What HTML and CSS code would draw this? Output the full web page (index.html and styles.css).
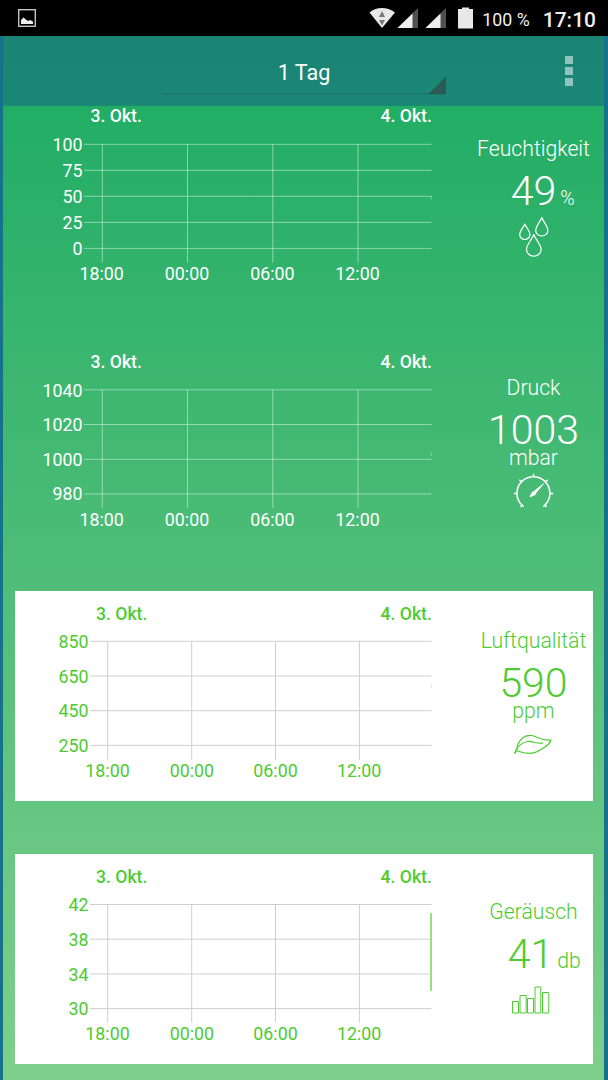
FILE: index.html
```
<!DOCTYPE html>
<html lang="de">
<head>
    <meta charset="UTF-8">
    <meta name="viewport" content="width=device-width, initial-scale=1.0">
    <title>Wetterstation</title>
    <link rel="stylesheet" href="styles.css">
</head>
<body>

    <div class="statusbar">
        <svg class="picture" width="18" height="18" viewBox="0 0 18 18">
            <rect x="0.7" y="0.7" width="16.6" height="16.6" fill="none" stroke="#c4c4c4" stroke-width="1.4"/>
            <path d="M3 15v-4l2.500-2.500 3 2.500 1.500 1 2-1 3 1.500v2.500z" fill="#eee"/>
        </svg>
        <div class="status-right">
            <svg width="78" height="22" viewBox="0 0 78 22">
                <path d="M0.500 5.500C4 2.200 8.500 1 13 1s9 1.200 13 4.500L13 21z" fill="#e8e8e8"/>
                <path d="M10 10l3-6 3 6zM10 13h6l-3 5.500z" fill="#777"/>
                <path d="M49 1v20H28.500z" fill="#505050"/>
                <path d="M43.500 6.500V21H28.500z" fill="#eee"/>
                <path d="M77 1v20H56.500z" fill="#505050"/>
                <path d="M71.500 6.500V21H56.500z" fill="#eee"/>
            </svg>
            <svg class="battery" width="15" height="22" viewBox="0 0 15 22">
                <path d="M4 0.500h7V2h4v19.500H0V2h4z" fill="#e8e8e8"/>
            </svg>
            <span class="percent">100 %</span>
            <span class="clock">17:10</span>
        </div>
    </div>

    <div class="app">
        <header class="toolbar">
            <div class="spinner">1 Tag</div>
            <div class="menu"><i></i><i></i><i></i></div>
        </header>

        <main>
            <!-- Feuchtigkeit -->
            <section class="module humidity">
                <svg class="chart" width="430" height="190" viewBox="0 0 430 190">
                    <path class="grid" d="M69 38.300H416.500M69 64.300H416.500M69 90.300H416.500M69 116.400H416.500M69 142.400H416.500M87.300 38V156.500M172.500 38V156.500M257.800 38V156.500M343 38V156.500"/>
                    <path class="line faint" d="M416.300 90V93.500"/>
                    <g class="day"><text x="75.500" y="16.300">3. Okt.</text><text x="365.500" y="16.300">4. Okt.</text></g>
                    <g class="y-axis">
                        <text x="67.500" y="45">100</text><text x="67.500" y="71">75</text><text x="67.500" y="97">50</text><text x="67.500" y="123">25</text><text x="67.500" y="149">0</text>
                    </g>
                    <g class="x-axis">
                        <text x="86.700" y="174">18:00</text><text x="172" y="174">00:00</text><text x="257.300" y="174">06:00</text><text x="342.500" y="174">12:00</text>
                    </g>
                </svg>
                <div class="info">
                    <div class="title">Feuchtigkeit</div>
                    <div class="value">49<span class="unit-inline percent-unit">%</span></div>
                    <svg class="icon" width="42" height="44" viewBox="0 0 42 44">
                        <path d="M11.800 9C10 13 6.700 16 6.700 19.500a5.100 5 0 0 0 10.200 0C16.900 16 13.500 13 11.800 9z"/>
                        <path d="M28.800 2.500C27 7 22.700 11.500 22.700 15.500a6.100 5.500 0 0 0 12.200 0C34.900 11.500 30.500 7 28.800 2.500z"/>
                        <path d="M20.800 19.500C19 24.500 13.500 29.500 13.500 34.500a7.300 6.700 0 0 0 14.600 0C28.100 29.500 22.500 24.500 20.800 19.500z"/>
                    </svg>
                </div>
            </section>

            <!-- Druck -->
            <section class="module pressure">
                <svg class="chart" width="430" height="210" viewBox="0 0 430 210">
                    <path class="grid" d="M69 49.800H416.500M69 84.500H416.500M69 119.300H416.500M69 154H416.500M87.300 50V168M172.500 50V168M257.800 50V168M343 50V168"/>
                    <path class="line faint" d="M416.300 112.500V116"/>
                    <g class="day"><text x="75.500" y="28">3. Okt.</text><text x="365.500" y="28">4. Okt.</text></g>
                    <g class="y-axis">
                        <text x="67.500" y="56.500">1040</text><text x="67.500" y="91">1020</text><text x="67.500" y="125.500">1000</text><text x="67.500" y="160.300">980</text>
                    </g>
                    <g class="x-axis">
                        <text x="86.700" y="185.500">18:00</text><text x="172" y="185.500">00:00</text><text x="257.300" y="185.500">06:00</text><text x="342.500" y="185.500">12:00</text>
                    </g>
                </svg>
                <div class="info">
                    <div class="title">Druck</div>
                    <div class="value">1003</div>
                    <div class="unit">mbar</div>
                    <svg class="icon gauge" width="42" height="42" viewBox="0 0 42 42">
                        <path d="M8.800 32A16.500 16.500 0 1 1 32 32M9.500 31.500L7.500 34M7.800 31l3 2.500M31.500 31.500l2 2.500M33.200 31l-3 2.500M4 20.500H0.800M36.900 20.500h3.300M20.500 4V0.800M8.800 9L6.300 6.700M32.100 9l2.500-2.300"/>
                        <path class="solid" d="M30.500 10.200L31 10.800L22.800 20.500a2.300 2.300 0 0 1-2.500 2.200L17.500 24.200l-1-1 1.800-3A2.300 2.300 0 0 1 20.300 18.500z"/>
                    </svg>
                </div>
            </section>

            <!-- Luftqualität -->
            <section class="module card air">
                <svg class="chart" width="430" height="210" viewBox="0 0 430 210">
                    <path class="grid" d="M75 50.300H416.500M75 85H416.500M75 119.700H416.500M75 154.400H416.500M92.700 50V168.500M176.700 50V168.500M260.500 50V168.500M344.400 50V168.500"/>
                    <path class="line faint" d="M416.300 94V96.500"/>
                    <g class="day"><text x="81" y="28.500">3. Okt.</text><text x="365.500" y="28.500">4. Okt.</text></g>
                    <g class="y-axis">
                        <text x="73.500" y="57">850</text><text x="73.500" y="91.600">650</text><text x="73.500" y="126.300">450</text><text x="73.500" y="161">250</text>
                    </g>
                    <g class="x-axis">
                        <text x="92.500" y="186">18:00</text><text x="176.900" y="186">00:00</text><text x="260.500" y="186">06:00</text><text x="344.200" y="186">12:00</text>
                    </g>
                </svg>
                <div class="info">
                    <div class="title">Luftqualität</div>
                    <div class="value">590</div>
                    <div class="unit">ppm</div>
                    <svg class="icon leaf" width="42" height="42" viewBox="0 0 42 42">
                        <path d="M2.500 27.500C5.500 25 4.500 22 6 18C9 12 14 9 20 9.500C26 10.500 28 14.800 39 14C37.500 20 31 22 25.500 25.500C20 28.500 11 27 5 24.800"/>
                        <path d="M2.500 27.500C5 21 10 16.500 15.500 15.500C21 15 24 18 31 17"/>
                    </svg>
                </div>
            </section>

            <!-- Geräusch -->
            <section class="module card noise">
                <svg class="chart" width="430" height="210" viewBox="0 0 430 210">
                    <path class="grid" d="M75 50.500H416.500M75 85.200H416.500M75 120H416.500M75 154.600H416.500M92.700 50V168.500M176.700 50V168.500M260.500 50V168.500M344.400 50V168.500"/>
                    <path class="line" d="M416 59V137"/>
                    <g class="day"><text x="81" y="28.500">3. Okt.</text><text x="365.500" y="28.500">4. Okt.</text></g>
                    <g class="y-axis">
                        <text x="73.500" y="57">42</text><text x="73.500" y="91.800">38</text><text x="73.500" y="126.500">34</text><text x="73.500" y="161">30</text>
                    </g>
                    <g class="x-axis">
                        <text x="92.500" y="186">18:00</text><text x="176.900" y="186">00:00</text><text x="260.500" y="186">06:00</text><text x="344.200" y="186">12:00</text>
                    </g>
                </svg>
                <div class="info">
                    <div class="title">Geräusch</div>
                    <div class="value">41<span class="unit-inline">db</span></div>
                    <svg class="icon bars" width="42" height="42" viewBox="0 0 42 42">
                        <path d="M0.500 24.500h6V36h-6zM8 18.500h6.200V36H8zM15.500 21.500h6V36h-6zM23 10h5.800v26H23zM30.500 15.500h6.300V36h-6.300z"/>
                    </svg>
                </div>
            </section>
        </main>
    </div>

</body>
</html>
```

FILE: styles.css
```
* {
    box-sizing: border-box;
}
body {
    margin: 0;
    height: 1080px;
    overflow: hidden;
    background-color: #18718a;
    color: white;
    font-family: Roboto, "Liberation Sans", sans-serif;
}
svg {
    display: block;
    flex: none;
}
.statusbar {
    display: flex;
    align-items: center;
    justify-content: space-between;
    height: 36px;
    padding: 0 12px 0 18px;
    background-color: #000;
    color: #eee;
}
.status-right {
    display: flex;
    align-items: center;
    height: 34px;
}
.battery {
    margin-left: 11px;
}
.percent {
    margin-left: 9px;
    padding-top: 2px;
    font-size: 17.8px;
}
.clock {
    margin-left: 13px;
    padding-top: 3px;
    font-size: 21px;
    font-weight: 500;
}
.app {
    height: 1044px;
    margin: 0 4px 0 3px;
}

/* Kopfzeile */
.toolbar {
    display: grid;
    grid-template-columns: 159px 284px 1fr;
    height: 70px;
    background: linear-gradient(#1a8373, #1b8877);
}
.spinner {
    grid-column: 2;
    height: 59px;
    padding-top: 14px;
    background:
        linear-gradient(135deg, transparent 50%, #2c5a55 50%) right bottom 1px / 18px 18px no-repeat,
        linear-gradient(#1c796c, #1c796c) left bottom / 100% 2px no-repeat;
    font-size: 21.5px;
    line-height: 46px;
    text-align: center;
}
.menu {
    display: flex;
    flex-direction: column;
    gap: 3px;
    align-items: flex-end;
    padding: 20px 31px 0 0;
}
.menu i {
    width: 8px;
    height: 8px;
    background-color: #8fc4bc;
}

/* Messwerte */
main {
    height: 974px;
    background: linear-gradient(#22ad65, #7fcf8c);
}
.module {
    display: flex;
    margin: 0 11px 0 12px;
}
.humidity {
    height: 234px;
}
.pressure {
    height: 251px;
}
.card {
    height: 210px;
    background-color: #fff;
    color: #4dcb31;
}
.noise {
    margin-top: 53px;
}
.chart {
    fill: currentColor;
    font-size: 17.8px;
}
.grid {
    fill: none;
    stroke: rgba(255, 255, 255, 0.45);
    stroke-width: 1;
}
.card .grid {
    stroke: #cfcfcf;
}
.line {
    fill: none;
    stroke: #97e07f;
    stroke-width: 2;
}
.faint {
    stroke: currentColor;
    stroke-width: 1;
    opacity: 0.35;
}
.day {
    font-size: 17.6px;
    font-weight: 500;
}
.y-axis {
    text-anchor: end;
}
.x-axis {
    text-anchor: middle;
}
.info {
    display: flex;
    flex-direction: column;
    align-items: center;
    width: 119px;
    margin-left: 29px;
    font-weight: 300;
}
.humidity .info {
    padding-top: 31px;
}
.pressure .info {
    padding-top: 36px;
}
.air .info {
    padding-top: 38px;
}
.noise .info {
    padding-top: 46px;
}
.title {
    font-size: 21.2px;
    line-height: 24px;
}
.value {
    display: flex;
    align-items: baseline;
    height: 36px;
    margin-top: 12px;
    font-size: 41px;
    line-height: 36px;
}
.unit {
    font-size: 21.2px;
    line-height: 20px;
}
.unit-inline {
    width: 0;
    padding-left: 4px;
    margin-right: -4px;
    font-size: 21.2px;
}
.percent-unit {
    font-size: 19.5px;
}
.noise .value {
    margin-right: 6px;
}
.icon {
    margin-top: 6px;
    fill: none;
    stroke: currentColor;
    stroke-width: 1.2;
    stroke-linejoin: round;
}
.gauge {
    margin-top: 5px;
    stroke-width: 1.5;
}
.leaf {
    margin-top: 5px;
    margin-right: 1px;
}
.gauge .solid {
    fill: currentColor;
    stroke: none;
}
.bars {
    margin-top: 5px;
    margin-right: 1px;
    stroke-width: 1;
}
```
